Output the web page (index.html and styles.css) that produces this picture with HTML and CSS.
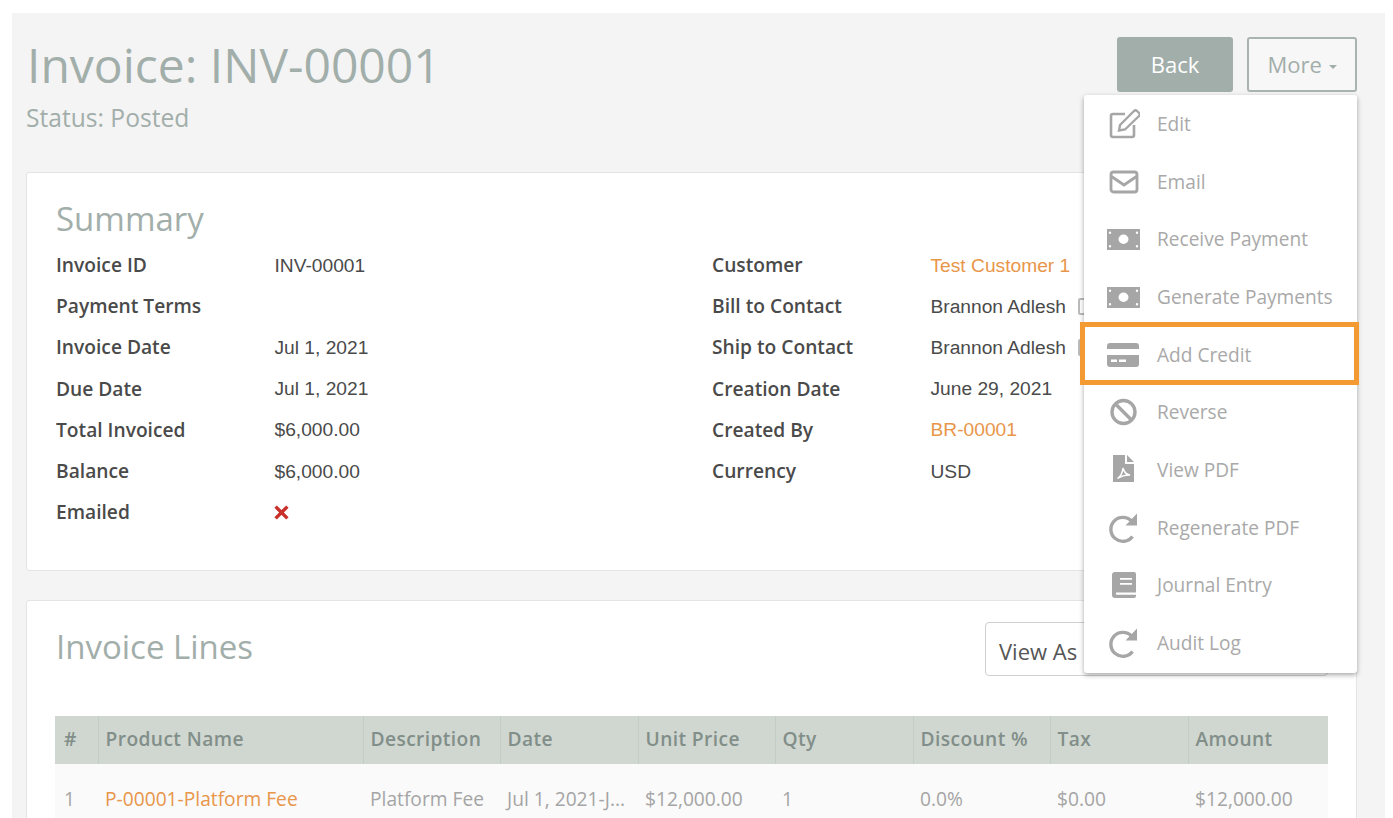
FILE: index.html
```html
<!DOCTYPE html>
<html lang="en">
<head>
    <meta charset="UTF-8">
    <meta name="viewport" content="width=device-width, initial-scale=1.0">
    <title>Invoice</title>
    <link rel="stylesheet" href="styles.css">
</head>
<body>
    <div class="page">
        <div class="page-head">
            <div>
                <h1>Invoice: INV-00001</h1>
                <p class="status">Status: Posted</p>
            </div>
            <div class="actions">
                <button class="btn btn-back">Back</button>
                <div class="more">
                    <button class="btn btn-more">More <span class="caret"></span></button>
                    <ul class="menu">
                        <li>
                            <svg viewBox="0 0 32 32"><path d="M17 6H5a2 2 0 0 0-2 2v19a2 2 0 0 0 2 2h19a2 2 0 0 0 2-2V17" fill="none" stroke="#a6a6a6" stroke-width="2.6"/><path d="M12 17 26 3a2.200 2.200 0 0 1 3 0l2 2a2.200 2.200 0 0 1 0 3L17 21.500l-6 1z" fill="none" stroke="#a6a6a6" stroke-width="2.400"/></svg>
                            Edit
                        </li>
                        <li>
                            <svg viewBox="0 0 32 32"><rect x="3" y="6" width="26" height="20" rx="2.500" fill="none" stroke="#a6a6a6" stroke-width="2.800"/><path d="M3.500 10.500 16 19l12.500-8.500" fill="none" stroke="#a6a6a6" stroke-width="2.800"/></svg>
                            Email
                        </li>
                        <li>
                            <svg class="wide" viewBox="0 0 36 24"><path fill="#a6a6a6" fill-rule="evenodd" d="M2 2h33v21H2zM18.500 7.500a5 4.700 0 1 0 0 9.400 5 4.700 0 0 0 0-9.400zM5 4.500a1.200 1.200 0 1 0 0 2.400 1.200 1.200 0 0 0 0-2.400zM32 4.500a1.200 1.200 0 1 0 0 2.400 1.200 1.200 0 0 0 0-2.400zM5 18a1.200 1.200 0 1 0 0 2.400A1.200 1.200 0 0 0 5 18zM32 18a1.200 1.200 0 1 0 0 2.400 1.200 1.200 0 0 0 0-2.400z"/></svg>
                            Receive Payment
                        </li>
                        <li>
                            <svg class="wide" viewBox="0 0 36 24"><path fill="#a6a6a6" fill-rule="evenodd" d="M2 2h33v21H2zM18.500 7.500a5 4.700 0 1 0 0 9.400 5 4.700 0 0 0 0-9.400zM5 4.500a1.200 1.200 0 1 0 0 2.400 1.200 1.200 0 0 0 0-2.400zM32 4.500a1.200 1.200 0 1 0 0 2.400 1.200 1.200 0 0 0 0-2.400zM5 18a1.200 1.200 0 1 0 0 2.400A1.200 1.200 0 0 0 5 18zM32 18a1.200 1.200 0 1 0 0 2.400 1.200 1.200 0 0 0 0-2.400z"/></svg>
                            Generate Payments
                        </li>
                        <li class="marked">
                            <svg class="wide" viewBox="0 0 36 24"><path fill="#a6a6a6" fill-rule="evenodd" d="M5 0h26a3 3 0 0 1 3 3v3H2V3a3 3 0 0 1 3-3zM2 12h32v9a3 3 0 0 1-3 3H5a3 3 0 0 1-3-3zM6 16.500v2.500h6v-2.500zM14 16.500v2.500h7v-2.500z"/></svg>
                            Add Credit
                        </li>
                        <li>
                            <svg viewBox="0 0 32 32"><circle cx="15.500" cy="16" r="11.500" fill="none" stroke="#a6a6a6" stroke-width="3.400"/><path d="M7.500 8l16 16" stroke="#a6a6a6" stroke-width="3.400"/></svg>
                            Reverse
                        </li>
                        <li>
                            <svg viewBox="0 0 32 32"><path fill="#a6a6a6" d="M5 1h12v9h9v18H5zM19 1l7 7h-7z"/><path d="M9.500 24.500c3-2 5-6 5.500-10.500 1 4 3 6.500 7 7-4.500 0-9 1-12.500 3.500z" fill="none" stroke="#fff" stroke-width="1.500"/></svg>
                            View PDF
                        </li>
                        <li>
                            <svg viewBox="0 0 32 32"><path d="M24.500 24.500A12 12 0 1 1 23.500 9" fill="none" stroke="#a6a6a6" stroke-width="3.400"/><path fill="#a6a6a6" d="M29 1.500v12H17.500z"/></svg>
                            Regenerate PDF
                        </li>
                        <li>
                            <svg viewBox="0 0 32 32"><path fill="#a6a6a6" fill-rule="evenodd" d="M7 3h19a2 2 0 0 1 2 2v22a2 2 0 0 1-2 2H7a3 3 0 0 1-3-3V6a3 3 0 0 1 3-3zM12 9v1.800h12V9zM12 14v1.800h12V14zM8 23.500v2.200h20v-2.200z"/></svg>
                            Journal Entry
                        </li>
                        <li>
                            <svg viewBox="0 0 32 32"><path d="M24.500 24.500A12 12 0 1 1 23.500 9" fill="none" stroke="#a6a6a6" stroke-width="3.400"/><path fill="#a6a6a6" d="M29 1.500v12H17.500z"/></svg>
                            Audit Log
                        </li>
                    </ul>
                </div>
            </div>
        </div>

        <div class="card summary">
            <h2>Summary</h2>
            <div class="summary-cols">
                <dl>
                    <div><dt>Invoice ID</dt><dd>INV-00001</dd></div>
                    <div><dt>Payment Terms</dt><dd></dd></div>
                    <div><dt>Invoice Date</dt><dd>Jul 1, 2021</dd></div>
                    <div><dt>Due Date</dt><dd>Jul 1, 2021</dd></div>
                    <div><dt>Total Invoiced</dt><dd>$6,000.00</dd></div>
                    <div><dt>Balance</dt><dd>$6,000.00</dd></div>
                    <div><dt>Emailed</dt><dd><svg class="cross" viewBox="0 0 14 14"><path d="M1.500 1.500l11 11M12.500 1.500l-11 11" stroke="#c9302c" stroke-width="3.200"/></svg></dd></div>
                </dl>
                <dl>
                    <div><dt>Customer</dt><dd><a href="#">Test Customer 1</a></dd></div>
                    <div><dt>Bill to Contact</dt><dd>Brannon Adlesh<span class="contact-icon"></span></dd></div>
                    <div><dt>Ship to Contact</dt><dd>Brannon Adlesh<span class="contact-icon"></span></dd></div>
                    <div><dt>Creation Date</dt><dd>June 29, 2021</dd></div>
                    <div><dt>Created By</dt><dd><a href="#">BR-00001</a></dd></div>
                    <div><dt>Currency</dt><dd>USD</dd></div>
                </dl>
            </div>
        </div>

        <div class="card lines">
            <div class="lines-head">
                <h2>Invoice Lines</h2>
                <div class="view-as">View As</div>
            </div>
            <table>
                <thead>
                    <tr>
                        <th class="c-num">#</th>
                        <th class="c-name">Product Name</th>
                        <th class="c-desc">Description</th>
                        <th class="c-date">Date</th>
                        <th class="c-price">Unit Price</th>
                        <th class="c-qty">Qty</th>
                        <th class="c-disc">Discount %</th>
                        <th class="c-tax">Tax</th>
                        <th>Amount</th>
                    </tr>
                </thead>
                <tbody>
                    <tr>
                        <td>1</td>
                        <td><a href="#">P-00001-Platform Fee</a></td>
                        <td>Platform Fee</td>
                        <td>Jul 1, 2021-J...</td>
                        <td>$12,000.00</td>
                        <td>1</td>
                        <td>0.0%</td>
                        <td>$0.00</td>
                        <td>$12,000.00</td>
                    </tr>
                </tbody>
            </table>
        </div>
    </div>
</body>
</html>
```

FILE: styles.css
```css
* {
    box-sizing: border-box;
}

html, body {
    height: 818px;
    overflow: hidden;
}

body {
    margin: 0;
    padding: 13px 8px 0 12px;
    background: #fff;
    font-family: "Open Sans", sans-serif;
    color: #333;
}

.page {
    height: 805px;
    padding: 0 28px 0 14px;
    background: #f4f4f4;
    overflow: hidden;
}

.page-head {
    display: flex;
    justify-content: space-between;
    height: 159px;
}

h1 {
    margin: 18px 0 0 1px;
    font-size: 48px;
    font-weight: 400;
    line-height: 68px;
    color: #a2aeaa;
}

.status {
    margin: 3px 0 0;
    font-size: 24.600px;
    line-height: 32px;
    color: #a2aeaa;
}

.actions {
    display: flex;
    gap: 14px;
    padding-top: 24px;
}

.btn {
    height: 55px;
    padding: 0 0 2px;
    border-radius: 3px;
    font-family: inherit;
    font-size: 22px;
}

.btn-back {
    width: 116px;
    border: none;
    background: #a2aeaa;
    color: #fff;
}

.btn-more {
    width: 110px;
    border: 2px solid #a9b4b0;
    background: #f7f7f7;
    color: #a2aeaa;
}

.caret {
    display: inline-block;
    margin-left: 1px;
    vertical-align: middle;
    border-top: 4px solid #a2aeaa;
    border-left: 4px solid transparent;
    border-right: 4px solid transparent;
}

.more {
    position: relative;
}

.menu {
    position: absolute;
    z-index: 2;
    top: 58px;
    right: 0;
    width: 273px;
    height: 578px;
    margin: 0;
    padding: 0;
    list-style: none;
    background: #fff;
    border-radius: 3px;
    box-shadow: 0 2px 5px rgba(0, 0, 0, 0.35);
}

.menu li {
    display: flex;
    align-items: center;
    height: 57.700px;
    padding-left: 24px;
    gap: 17px;
    font-size: 19.100px;
    color: #a9a9a9;
}

.menu svg {
    width: 32px;
    height: 32px;
    flex: none;
}

.menu svg.wide {
    width: 36px;
    height: 24px;
    margin-left: -3px;
    margin-right: -1px;
}

.menu li.marked {
    position: relative;
}

.menu li.marked::after {
    content: "";
    position: absolute;
    top: -4px;
    left: -4px;
    right: -2px;
    bottom: -2px;
    border: 5px solid #f39a33;
}

.card {
    background: #fff;
    border: 1px solid #e4e4e4;
    border-radius: 3px;
}

h2 {
    margin: 0;
    font-size: 33px;
    font-weight: 400;
    line-height: 44px;
    color: #a2aeaa;
}

.summary {
    height: 399px;
    margin-bottom: 29px;
    padding: 24px 28px 0 29px;
}

.summary-cols {
    display: flex;
}

dl {
    flex: none;
    width: 656px;
    margin: 3px 0 0;
}

dl div {
    display: flex;
    height: 41.200px;
    align-items: center;
    font-size: 19.200px;
}

dt {
    width: 218.500px;
    font-weight: 600;
    color: #4a4a4a;
}

dd {
    display: flex;
    align-items: center;
    margin: 0;
    padding-top: 2px;
    font-family: "Liberation Sans", sans-serif;
    color: #4a4a4a;
}

a {
    color: #e8964a;
    text-decoration: none;
}

.contact-icon {
    width: 14px;
    height: 17px;
    margin-left: 12px;
    border: 2px solid #bbb;
    border-radius: 2px;
}

.cross {
    display: block;
    width: 15px;
    height: 15px;
    margin-left: -1px;
}

.lines {
    height: 300px;
    padding: 0 28px;
}

.lines h2 {
    margin-left: 1px;
}

.lines-head {
    display: flex;
    justify-content: space-between;
    height: 115px;
    padding-top: 24px;
}

.view-as {
    width: 343px;
    height: 54px;
    margin-top: -3px;
    padding: 15px 13px 0;
    border: 1px solid #d0d0d0;
    border-radius: 4px;
    font-size: 22px;
    line-height: 26px;
    color: #555;
}

table {
    width: 100%;
    table-layout: fixed;
    border-collapse: collapse;
    font-size: 19.200px;
}

th {
    height: 48px;
    padding: 0 7px 4px;
    background: #cfd7d0;
    border-left: 1px solid #c3ccc5;
    text-align: left;
    font-weight: 600;
    letter-spacing: 0.4px;
    color: #828e89;
}

th:first-child {
    padding-left: 9px;
    border-left: none;
}

td {
    height: 68px;
    padding: 0 7px;
    background: #fafafa;
    color: #a5a5a5;
    white-space: nowrap;
}

td:first-child {
    padding-left: 9px;
}

.c-num { width: 43px; }
.c-name { width: 265px; }
.c-desc { width: 137px; }
.c-date { width: 138px; }
.c-price { width: 137px; }
.c-qty { width: 138px; }
.c-disc { width: 137px; }
.c-tax { width: 138px; }
```
